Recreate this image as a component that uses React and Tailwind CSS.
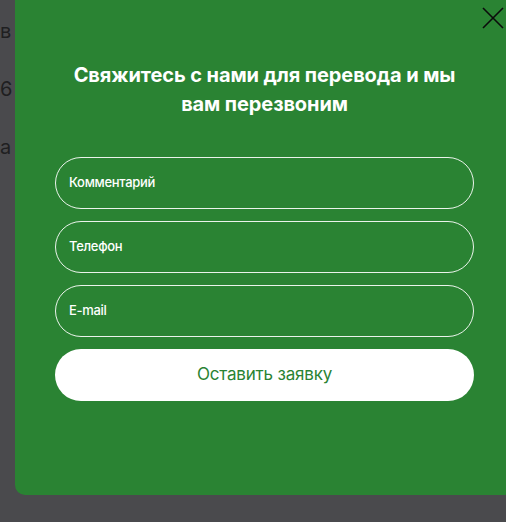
const fields = ['Комментарий', 'Телефон', 'E-mail'];

const CloseIcon = () => (
  <svg width="22" height="22" viewBox="0 0 22 22" fill="none" stroke="#0b0b0b" strokeWidth="1.6">
    <path d="M1 1 L21 21 M21 1 L1 21" />
  </svg>
);

const CallbackForm = () => (
  <div className="absolute left-[15px] top-[-10px] w-[499px] h-[505px] bg-[#2a8333] rounded-[10px] px-10 pt-[71px]">
    <button className="absolute right-[10px] top-[17px]">
      <CloseIcon />
    </button>
    <h2 className="text-white text-center font-bold text-[20px] leading-[29px] tracking-[-0.1px]">
      Свяжитесь с нами для перевода и мы
      <br />
      вам перезвоним
    </h2>
    <form className="mt-[38px] flex flex-col gap-3">
      {fields.map((f) => (
        <div
          key={f}
          className="h-[52px] rounded-full border border-white/90 flex items-center px-[13px] text-white text-[13px] font-medium tracking-[-0.3px]"
        >
          {f}
        </div>
      ))}
      <button
        type="button"
        className="h-[52px] rounded-full bg-white text-[#2a8333] text-[17px] tracking-[-0.2px]"
      >
        Оставить заявку
      </button>
    </form>
  </div>
);

export default function App() {
  return (
    <div
      className="relative w-[506px] h-[522px] overflow-hidden bg-[#4a4a4d]"
      style={{ fontFamily: 'Inter, "Noto Sans", sans-serif' }}
    >
      <div className="pt-[2px] text-[20px] leading-[58px] text-[#1f1f21]">
        <div>в</div>
        <div>6</div>
        <div>а</div>
      </div>
      <CallbackForm />
    </div>
  );
}
